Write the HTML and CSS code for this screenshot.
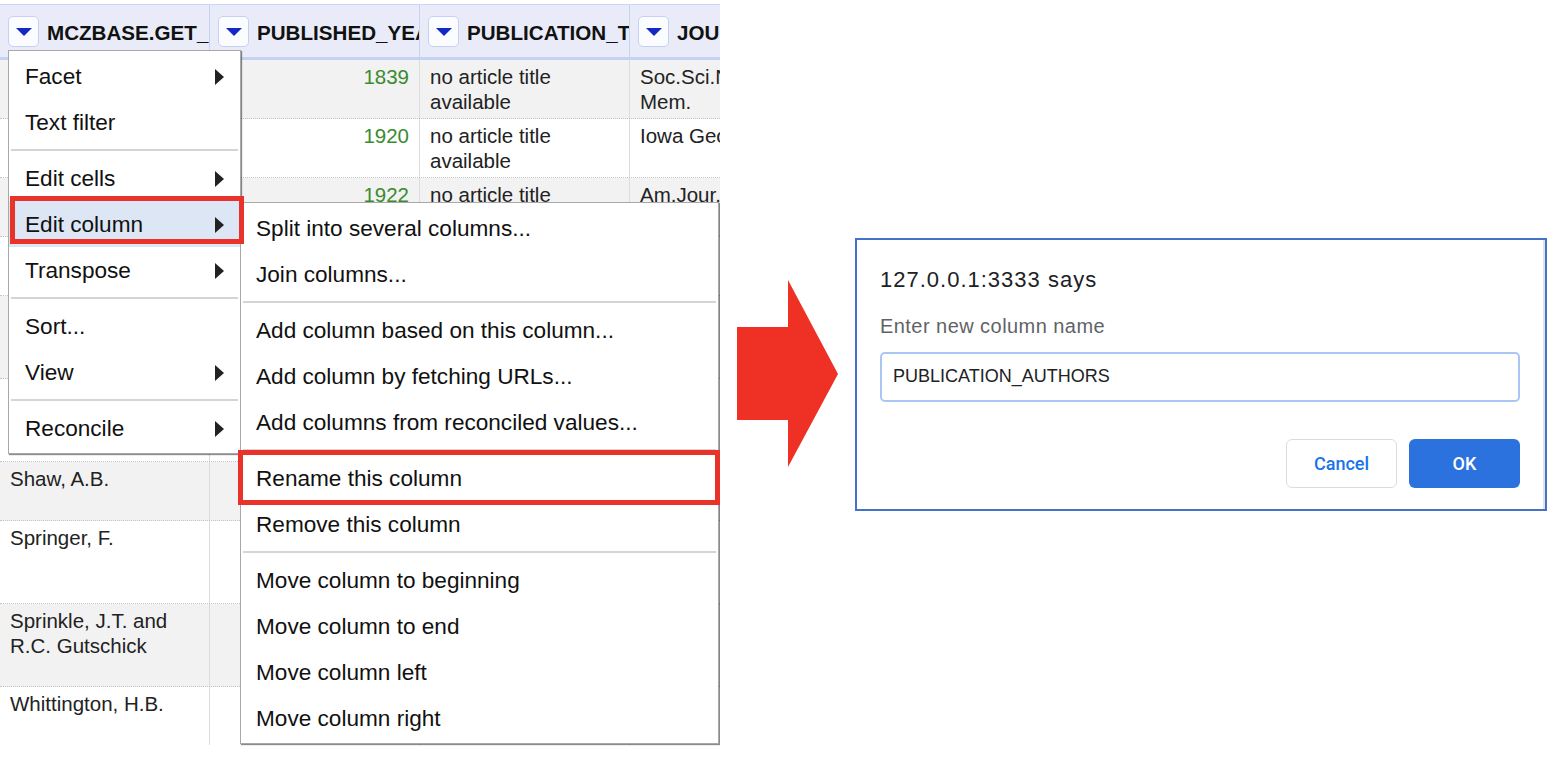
FILE: index.html
```html
<!DOCTYPE html>
<html lang="en">
<head>
<meta charset="utf-8">
<title>Rename column</title>
<link rel="stylesheet" href="styles.css">
</head>
<body>
<div class="stage">
  <div class="sheet">
    <div class="thead">
      <div class="th"><span class="dd"><svg width="16" height="8" viewBox="0 0 16 8"><path d="M0 0H16L8 8Z"/></svg></span><span class="hname">MCZBASE.GET_PUBLICATION_AUTHORS</span></div>
      <div class="th"><span class="dd"><svg width="16" height="8" viewBox="0 0 16 8"><path d="M0 0H16L8 8Z"/></svg></span><span class="hname">PUBLISHED_YEAR</span></div>
      <div class="th"><span class="dd"><svg width="16" height="8" viewBox="0 0 16 8"><path d="M0 0H16L8 8Z"/></svg></span><span class="hname">PUBLICATION_TITLE</span></div>
      <div class="th"><span class="dd"><svg width="16" height="8" viewBox="0 0 16 8"><path d="M0 0H16L8 8Z"/></svg></span><span class="hname">JOURNAL_NAME</span></div>
    </div>
    <div class="tbody">
      <div class="row alt h2"><div class="td"></div><div class="td num">1839</div><div class="td">no article title available</div><div class="td">Soc.Sci.Nat.Hist. Mem.</div></div>
      <div class="row h2"><div class="td"></div><div class="td num">1920</div><div class="td">no article title available</div><div class="td">Iowa Geol. Survey</div></div>
      <div class="row alt h2"><div class="td"></div><div class="td num">1922</div><div class="td">no article title available</div><div class="td">Am.Jour.Sci.</div></div>
      <div class="row h2"><div class="td"></div><div class="td num"></div><div class="td"></div><div class="td"></div></div>
      <div class="row alt h3"><div class="td"></div><div class="td num"></div><div class="td"></div><div class="td"></div></div>
      <div class="row h3"><div class="td"></div><div class="td num"></div><div class="td"></div><div class="td"></div></div>
      <div class="row alt h2"><div class="td">Shaw, A.B.</div><div class="td num"></div><div class="td"></div><div class="td"></div></div>
      <div class="row h3"><div class="td">Springer, F.</div><div class="td num"></div><div class="td"></div><div class="td"></div></div>
      <div class="row alt h3"><div class="td">Sprinkle, J.T. and R.C. Gutschick</div><div class="td num"></div><div class="td"></div><div class="td"></div></div>
      <div class="row h2"><div class="td">Whittington, H.B.</div><div class="td num"></div><div class="td"></div><div class="td"></div></div>
    </div>

    <div class="menu menu-main">
      <div class="mi">Facet<span class="caret"></span></div>
      <div class="mi">Text filter</div>
      <div class="sep"></div>
      <div class="mi">Edit cells<span class="caret"></span></div>
      <div class="mi hl">Edit column<span class="caret"></span></div>
      <div class="mi">Transpose<span class="caret"></span></div>
      <div class="sep"></div>
      <div class="mi">Sort...</div>
      <div class="mi">View<span class="caret"></span></div>
      <div class="sep"></div>
      <div class="mi">Reconcile<span class="caret"></span></div>
    </div>

    <div class="menu menu-sub">
      <div class="mi">Split into several columns...</div>
      <div class="mi">Join columns...</div>
      <div class="sep"></div>
      <div class="mi">Add column based on this column...</div>
      <div class="mi">Add column by fetching URLs...</div>
      <div class="mi">Add columns from reconciled values...</div>
      <div class="sep"></div>
      <div class="mi">Rename this column</div>
      <div class="mi">Remove this column</div>
      <div class="sep"></div>
      <div class="mi">Move column to beginning</div>
      <div class="mi">Move column to end</div>
      <div class="mi">Move column left</div>
      <div class="mi">Move column right</div>
    </div>

    <div class="mark mark-edit"></div>
    <div class="mark mark-rename"></div>
  </div>

  <svg class="arrow" width="101" height="187" viewBox="0 0 101 187"><path d="M0 47H51V0L101 94L51 187V140H0Z"/></svg>

  <div class="dialog">
    <div class="dlg-title">127.0.0.1:3333 says</div>
    <div class="dlg-label">Enter new column name</div>
    <div class="dlg-input">PUBLICATION_AUTHORS</div>
    <div class="dlg-actions">
      <div class="btn btn-cancel">Cancel</div>
      <div class="btn btn-ok">OK</div>
    </div>
  </div>
</div>
</body>
</html>
```

FILE: styles.css
```css
* { box-sizing: border-box; }

body {
  margin: 0;
  background: #fff;
  font-family: "Liberation Sans", Arial, sans-serif;
}

.stage {
  display: flex;
  align-items: center;
  height: 748px;
}

/* ---------- spreadsheet ---------- */
.sheet {
  position: relative;
  flex: none;
  width: 720px;
  height: 748px;
  overflow: hidden;
}

.thead {
  display: grid;
  grid-template-columns: repeat(4, 210px);
  margin-top: 4px;
  height: 56px;
  background: #e9ecf8;
  border-top: 1px solid #c9d5f3;
  border-bottom: 3px solid #c4d3f5;
}

.th {
  display: flex;
  align-items: center;
  gap: 8px;
  padding-left: 8px;
  border-right: 1px solid #c6d3f2;
  overflow: hidden;
  white-space: nowrap;
  font-size: 20.6px;
  font-weight: bold;
  color: #111;
}

.hname { padding-top: 3px; }

.dd {
  flex: none;
  display: flex;
  align-items: center;
  justify-content: center;
  width: 31px;
  height: 31px;
  margin-top: 1px;
  background: #fbfcff;
  border: 1px solid #c5d1f1;
  border-radius: 5px;
}

.dd svg path { fill: #1428c4; }

.tbody {
  height: 685px;
  overflow: hidden;
}

.row {
  display: grid;
  grid-template-columns: repeat(4, 210px);
  border-bottom: 1px dotted #c4c4c4;
  background: #fff;
}

.row.alt { background: #f2f2f2; }
.row.h2 { height: 59px; }
.row.h3 { height: 83px; }

.td {
  padding: 4px 10px 0;
  border-right: 1px solid #dcdcdc;
  font-size: 20.5px;
  line-height: 25px;
  color: #222;
  overflow: hidden;
}

.td.num {
  text-align: right;
  color: #3a8b2f;
}

/* ---------- menus ---------- */
.menu {
  position: absolute;
  padding: 2px 0;
  background: #fff;
  border: 1px solid #a8a8a8;
  box-shadow: 1px 1px 1px rgba(0, 0, 0, 0.45);
  font-size: 22.6px;
  color: #111;
}

.menu-main { left: 8px; top: 50px; width: 233px; }
.menu-sub { left: 240px; top: 202px; width: 479px; }

.mi {
  display: flex;
  align-items: center;
  justify-content: space-between;
  height: 46px;
  padding: 1px 16px 0;
  white-space: nowrap;
}

.menu-sub .mi { padding-left: 15px; }

.mi.hl { background: #dce6f5; }

.caret {
  width: 0;
  height: 0;
  border-left: 9px solid #222;
  border-top: 8px solid transparent;
  border-bottom: 8px solid transparent;
}

.sep {
  height: 2px;
  margin: 4px 2px;
  background: #d4d4d4;
}

.mark {
  position: absolute;
  border: 5px solid #e8322a;
}

.mark-edit { left: 10px; top: 196px; width: 234px; height: 48px; }
.mark-rename { left: 238px; top: 450px; width: 482px; height: 55px; }

/* ---------- arrow ---------- */
.arrow {
  flex: none;
  margin-left: 17px;
  margin-top: -1px;
}

.arrow path { fill: #ee3124; }

/* ---------- dialog ---------- */
.dialog {
  flex: none;
  display: flex;
  flex-direction: column;
  margin-left: 17px;
  width: 692px;
  height: 273px;
  padding: 27px 25px 0 23px;
  background: #fff;
  border: 2px solid #4472c4;
  box-shadow: inset -2px 0 0 #e2e2e2;
}

.dlg-title {
  font-size: 22px;
  line-height: 26px;
  letter-spacing: 1px;
  color: #202124;
}

.dlg-label {
  margin-top: 23px;
  font-size: 20px;
  line-height: 20px;
  letter-spacing: 0.45px;
  color: #5f6368;
}

.dlg-input {
  display: flex;
  align-items: center;
  margin-top: 16px;
  height: 50px;
  padding-left: 11px;
  border: 2px solid #a9c6f5;
  border-radius: 5px;
  font-size: 18px;
  color: #202124;
}

.dlg-actions {
  display: flex;
  justify-content: flex-end;
  gap: 12px;
  margin-top: 37px;
}

.btn {
  display: flex;
  align-items: center;
  justify-content: center;
  width: 111px;
  height: 49px;
  border-radius: 6px;
  font-family: Roboto, "Liberation Sans", sans-serif;
  font-size: 18px;
  font-weight: 500;
}

.btn-cancel {
  background: #fff;
  border: 1px solid #dadce0;
  color: #1a73e8;
}

.btn-ok {
  background: #2b72de;
  color: #fff;
}
```
